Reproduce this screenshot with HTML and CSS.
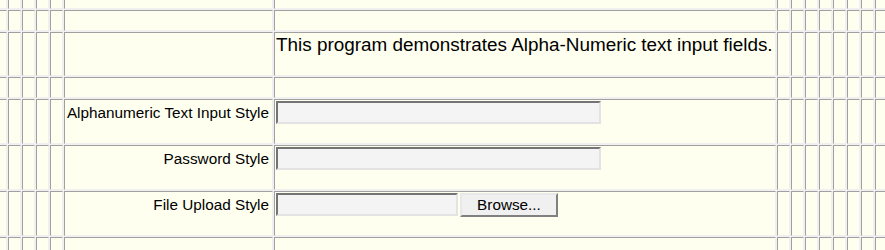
FILE: index.html
```html
<!DOCTYPE html>
<html lang="en">
<head>
    <meta charset="UTF-8">
    <title>Alpha-Numeric Text Input</title>
    <link rel="stylesheet" href="styles.css">
</head>
<body>
    <table class="grid">
        <tr class="short">
            <td class="gap"></td><td class="gap"></td><td class="gap"></td><td class="gap"></td><td class="gap"></td>
            <td class="label"></td>
            <td class="main"></td>
            <td class="gap"></td><td class="gap"></td><td class="gap"></td><td class="gap"></td><td class="gap"></td><td class="gap"></td><td class="gap"></td><td class="gap"></td>
        </tr>
        <tr class="short">
            <td></td><td></td><td></td><td></td><td></td>
            <td></td>
            <td></td>
            <td></td><td></td><td></td><td></td><td></td><td></td><td></td><td></td>
        </tr>
        <tr class="head">
            <td></td><td></td><td></td><td></td><td></td>
            <td></td>
            <td class="intro">This program demonstrates Alpha-Numeric text input fields.</td>
            <td></td><td></td><td></td><td></td><td></td><td></td><td></td><td></td>
        </tr>
        <tr class="short">
            <td></td><td></td><td></td><td></td><td></td>
            <td></td>
            <td></td>
            <td></td><td></td><td></td><td></td><td></td><td></td><td></td><td></td>
        </tr>
        <tr class="field">
            <td></td><td></td><td></td><td></td><td></td>
            <td class="name">Alphanumeric Text Input Style</td>
            <td><input type="text" class="text-box"></td>
            <td></td><td></td><td></td><td></td><td></td><td></td><td></td><td></td>
        </tr>
        <tr class="field">
            <td></td><td></td><td></td><td></td><td></td>
            <td class="name">Password Style</td>
            <td><input type="password" class="text-box"></td>
            <td></td><td></td><td></td><td></td><td></td><td></td><td></td><td></td>
        </tr>
        <tr class="field">
            <td></td><td></td><td></td><td></td><td></td>
            <td class="name">File Upload Style</td>
            <td><input type="text" class="text-box file-path" readonly><button type="button" class="browse">Browse...</button></td>
            <td></td><td></td><td></td><td></td><td></td><td></td><td></td><td></td>
        </tr>
        <tr class="field">
            <td></td><td></td><td></td><td></td><td></td>
            <td></td>
            <td></td>
            <td></td><td></td><td></td><td></td><td></td><td></td><td></td><td></td>
        </tr>
    </table>
</body>
</html>
```

FILE: styles.css
```css
html, body {
    margin: 0;
    padding: 0;
    background: #fffff0;
    overflow: hidden;
}
body {
    font-family: "Liberation Sans", Arial, sans-serif;
    font-size: 15px;
    color: #000;
}
.grid {
    table-layout: fixed;
    width: 895px;
    margin: -13px 0 0 -7px;
    border-collapse: separate;
    border-spacing: 1px;
    background: #f0f0f0;
}
.grid td {
    box-sizing: border-box;
    padding: 1px;
    background: #fffff0;
    border: 1px solid;
    border-color: #a0a0a0 #f0f0f0 #f0f0f0 #a0a0a0;
    vertical-align: baseline;
    white-space: nowrap;
}
.grid td.gap {
    width: 13px;
}
.grid td.label {
    width: 209px;
}
.grid td.main {
    width: 502px;
}
.short {
    height: 21px;
}
.head {
    height: 44px;
}
.field {
    height: 45px;
}
.intro {
    font-size: 18.9px;
    padding-top: 2px;
}
.grid td.name {
    font-size: 15.3px;
    text-align: right;
    padding-right: 3px;
}
.text-box {
    box-sizing: border-box;
    width: 325px;
    height: 23px;
    margin: 0;
    padding: 1px 2px;
    font-family: "Liberation Sans", Arial, sans-serif;
    font-size: 15px;
    background: #f4f4f4;
    border: 2px solid;
    border-color: #747474 #e3e3e3 #e3e3e3 #747474;
    outline: none;
}
.file-path {
    width: 182px;
}
.browse {
    box-sizing: border-box;
    width: 98px;
    height: 24px;
    margin: 0 0 0 2px;
    padding: 0;
    font-family: "Liberation Sans", Arial, sans-serif;
    font-size: 15.3px;
    color: #000;
    background: #f0f0f0;
    border: 2px solid;
    border-color: #e8e8e8 #808080 #808080 #e8e8e8;
    border-radius: 0;
}
```
